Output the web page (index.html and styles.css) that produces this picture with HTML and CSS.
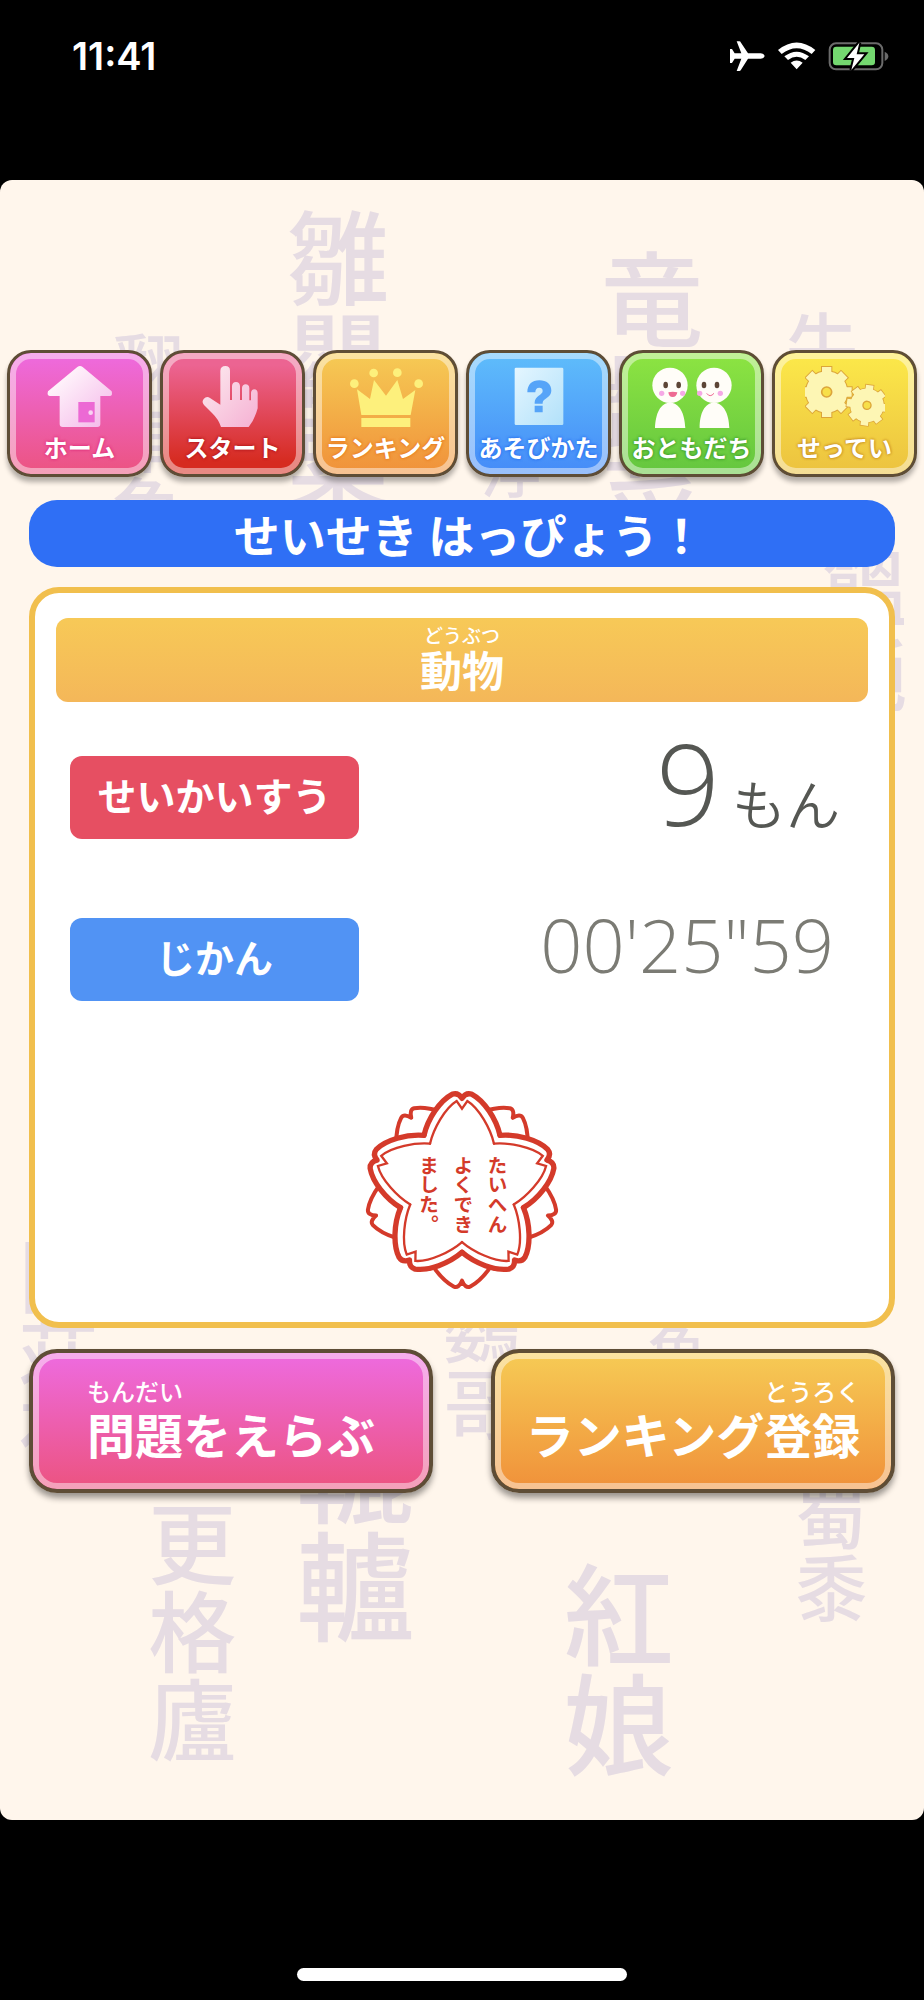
FILE: index.html
```html
<!DOCTYPE html>
<html lang="ja">
<head>
    <meta charset="UTF-8">
    <meta name="viewport" content="width=device-width, initial-scale=1.0">
    <title>せいせき はっぴょう！</title>
    <link rel="stylesheet" href="styles.css">
</head>
<body>
    <div class="status-bar">
        <span class="status-time">11:41</span>
        <div class="status-icons">
            <svg width="36" height="32" viewBox="90 30 108 96" aria-hidden="true">
                <path fill="#fff" d="M113 34h8q3 0 5 4l21 32h38q11 1 12 8q-1 7-12 8h-38l-21 33q-2 4-5 4h-8l14-37h-20l-8 13h-6V57h6l8 13h20z"/>
            </svg>
            <svg width="39" height="32" viewBox="234 30 117 96" aria-hidden="true">
                <path fill="#fff" d="M237 60q56-45 112 0l-11 12q-45-35-90 0zM256 79q37-28 74 0l-11 11q-26-19-52 0zM275 98q18-13 36 0l-18 20z"/>
            </svg>
            <svg width="61" height="32" viewBox="384 30 183 96" aria-hidden="true">
                <rect x="389" y="40" width="158" height="78" rx="19" fill="none" stroke="#6b6b6b" stroke-width="6"/>
                <path fill="#6b6b6b" d="M554 65q11 5 11 14t-11 14z"/>
                <rect x="399" y="50" width="126" height="56" rx="10" fill="#74d870"/>
                <path fill="#fff" stroke="#000" stroke-width="12" paint-order="stroke" d="M478 38l-37 46h22l-9 36 39-47h-23z"/>
            </svg>
        </div>
    </div>

    <div class="app">
        <div class="kanji-bg" aria-hidden="true">
            <span class="kanji kanji-hinageshi">雛罌粟</span>
            <span class="kanji kanji-manbou">翻車魚</span>
            <span class="kanji kanji-asparagus">竜髭菜</span>
            <span class="kanji kanji-gobou">牛蒡</span>
            <span class="kanji kanji-udon">饂飩</span>
            <span class="kanji kanji-uki">浮</span>
            <span class="kanji kanji-left">門荘荷</span>
            <span class="kanji kanji-inko">鸚哥</span>
            <span class="kanji kanji-uo">魚</span>
            <span class="kanji kanji-rokuro">轆轤</span>
            <span class="kanji kanji-kangaroo">更格廬</span>
            <span class="kanji kanji-tentou">紅娘</span>
            <span class="kanji kanji-kibi">蜀黍</span>
        </div>

        <nav class="menu">
            <a href="#home" class="menu-btn menu-home">
                <svg class="menu-icon" viewBox="119 72 240 192" aria-hidden="true">
                    <defs>
                        <linearGradient id="g-home" x1="0" y1="0" x2="1" y2="1"><stop offset="0.2" stop-color="#fff4fb"/><stop offset="1" stop-color="#f3b5e8"/></linearGradient>
                    </defs>
                    <path fill="url(#g-home)" d="M231 81q8-6 16 0l87 73q4 14-6 14h-28v84q0 9-9 9H187q-9 0-9-9v-84h-30q-9-1-5-14z"/>
                    <path fill="#ec69d4" d="M234 186h49v61h-49z"/>
                    <circle cx="271" cy="218" r="7" fill="#f8d3f2"/>
                </svg>
                <span>ホーム</span>
            </a>
            <a href="#start" class="menu-btn menu-start">
                <svg class="menu-icon" viewBox="577 72 240 192" aria-hidden="true">
                    <defs>
                        <linearGradient id="g-hand" x1="0" y1="0" x2="1" y2="1"><stop offset="0.2" stop-color="#fbe0ea"/><stop offset="1" stop-color="#f5b0d3"/></linearGradient>
                    </defs>
                    <path fill="url(#g-hand)" d="M659 92q1-14 15-14t14 14v88h6v-42q1-12 12-12t12 12v42h6v-36q1-11 11-11t11 11v37h5v-22q1-11 10-11t10 11v46q-8 31-27 56h-83q-7-23-27-42l-24-24q-8-9-1-18 9-11 19-3l31 20z"/>
                </svg>
                <span>スタート</span>
            </a>
            <a href="#ranking" class="menu-btn menu-ranking">
                <svg class="menu-icon" viewBox="122 72 240 192" aria-hidden="true">
                    <g fill="#fdf07c">
                        <path d="M155 148l39 29 12-57 36 47 34-47 17 57 37-27-14 75H168zM168 234h147v27H168z"/>
                        <circle cx="147" cy="131" r="13"/>
                        <circle cx="205" cy="99" r="13"/>
                        <circle cx="276" cy="98" r="13"/>
                        <circle cx="340" cy="131" r="13"/>
                    </g>
                </svg>
                <span>ランキング</span>
            </a>
            <a href="#howto" class="menu-btn menu-howto">
                <svg class="menu-icon" viewBox="580 72 240 192" aria-hidden="true">
                    <defs>
                        <linearGradient id="g-card" x1="0" y1="0" x2="1" y2="1"><stop offset="0" stop-color="#e4f6ff"/><stop offset="1" stop-color="#b2e1fa"/></linearGradient>
                    </defs>
                    <rect x="627" y="83" width="146" height="172" rx="4" fill="url(#g-card)"/>
                    <path fill="#56a4f8" d="M665 157c0-23 14-36 36-36 22 0 36 12 36 31 0 21-26 23-26 36v3h-24v-4c0-19 24-22 24-34 0-7-4-10-10-10-8 0-12 5-12 14zM687 197h24v20h-24z"/>
                </svg>
                <span>あそびかた</span>
            </a>
            <a href="#friends" class="menu-btn menu-friends">
                <svg class="menu-icon" viewBox="125 72 240 192" aria-hidden="true">
                    <g fill="#fffdf8">
                        <ellipse cx="179" cy="136" rx="53" ry="53"/>
                        <ellipse cx="311" cy="136" rx="53" ry="53"/>
                        <path d="M134 264c2-44 16-76 45-76s44 32 46 76zM268 264c0-44 15-76 43-76s45 32 46 76z"/>
                    </g>
                    <g fill="#5d4637">
                        <ellipse cx="166" cy="135" rx="7" ry="10"/>
                        <ellipse cx="205" cy="135" rx="7" ry="10"/>
                        <ellipse cx="281" cy="135" rx="7" ry="10"/>
                        <ellipse cx="320" cy="135" rx="7" ry="10"/>
                    </g>
                    <g fill="#f5a9e5">
                        <circle cx="154" cy="160" r="8"/>
                        <circle cx="217" cy="160" r="8"/>
                        <circle cx="268" cy="160" r="8"/>
                        <circle cx="330" cy="160" r="8"/>
                    </g>
                    <path fill="#ee6a93" d="M174 157q13-3 27 0-2 14-14 14t-13-14z"/>
                    <path fill="none" stroke="#ee6a93" stroke-width="3" d="M289 160q10 14 22 0"/>
                </svg>
                <span>おともだち</span>
            </a>
            <a href="#settings" class="menu-btn menu-settings">
                <svg class="menu-icon" viewBox="583 72 240 192" aria-hidden="true">
                    <defs>
                        <g id="gear" fill="none">
                            <g stroke="#dca53a">
                                <path stroke-width="34" d="M648 78v156M570 156h156M593 101l110 110M703 101L593 211"/>
                                <circle cx="648" cy="156" r="39" stroke-width="52"/>
                            </g>
                            <g stroke="#fdf6b4">
                                <path stroke-width="28" d="M648 81v150M573 156h150M595 103l106 106M701 103L595 209"/>
                                <circle cx="648" cy="156" r="39" stroke-width="46"/>
                            </g>
                            <circle cx="648" cy="156" r="15" fill="#f7df49" stroke="#dca53a" stroke-width="5"/>
                        </g>
                    </defs>
                    <use href="#gear"/>
                    <use href="#gear" transform="translate(769 196) rotate(8) scale(0.81) translate(-648 -156)"/>
                </svg>
                <span>せってい</span>
            </a>
        </nav>

        <main class="content">
            <h1 class="title">せいせき はっぴょう！</h1>

            <section class="card">
                <h2 class="category"><ruby>動物<rt>どうぶつ</rt></ruby></h2>

                <dl class="scores">
                    <div class="score-row">
                        <dt class="label label-red">せいかいすう</dt>
                        <dd class="count">9<span class="unit">もん</span></dd>
                    </div>
                    <div class="score-row">
                        <dt class="label label-blue">じかん</dt>
                        <dd class="time">00'25"59</dd>
                    </div>
                </dl>

                <svg class="stamp" viewBox="4 0 660 660" role="img" aria-label="たいへんよくできました。">
                    <defs>
                        <path id="back" d="M252 566C268 588 290 610 310 620Q324 626 334 602Q344 626 358 620C378 610 400 588 416 566"/>
                        <path id="petal" d="M220 166C232 115 268 62 304 43Q322 36 334 55Q346 36 364 43C400 62 436 115 448 166"/>
                        <path id="line" d="M238 191C248 148 282 85 318 63L334 86L350 63C386 85 420 148 430 191"/>
                    </defs>
                    <g fill="#fff" stroke="#d43a2a" stroke-width="12" stroke-linejoin="round">
                        <use href="#back"/>
                        <use href="#back" transform="rotate(72 334 323) translate(0 -8)"/>
                        <use href="#back" transform="rotate(144 334 323) translate(0 -20)"/>
                        <use href="#back" transform="rotate(216 334 323) translate(0 -20)"/>
                        <use href="#back" transform="rotate(288 334 323) translate(0 -8)"/>
                    </g>
                    <circle cx="334" cy="323" r="200" fill="#fff"/>
                    <g fill="#fff" stroke="#d43a2a" stroke-width="16" stroke-linecap="round" stroke-linejoin="round">
                        <use href="#petal"/>
                        <use href="#petal" transform="rotate(72 334 323)"/>
                        <use href="#petal" transform="rotate(144 334 323)"/>
                        <use href="#petal" transform="rotate(216 334 323)"/>
                        <use href="#petal" transform="rotate(288 334 323)"/>
                    </g>
                    <g fill="none" stroke="#d43a2a" stroke-width="7" stroke-linecap="round">
                        <use href="#line"/>
                        <use href="#line" transform="rotate(72 334 323)"/>
                        <use href="#line" transform="rotate(144 334 323)"/>
                        <use href="#line" transform="rotate(216 334 323)"/>
                        <use href="#line" transform="rotate(288 334 323)"/>
                    </g>
                    <g class="stamp-text">
                        <text x="441" y="226">たいへん</text>
                        <text x="338" y="226">よくでき</text>
                        <text x="235" y="226">ました。</text>
                    </g>
                </svg>
            </section>

            <div class="actions">
                <button type="button" class="action action-select"><ruby>問題<rt>もんだい</rt></ruby>をえらぶ</button>
                <button type="button" class="action action-ranking">ランキング<ruby>登録<rt>とうろく</rt></ruby></button>
            </div>
        </main>
    </div>

    <div class="home-indicator"></div>
</body>
</html>
```
FILE: styles.css
```css
* {
    box-sizing: border-box;
}

body {
    margin: 0;
    min-height: 100vh;
    display: flex;
    flex-direction: column;
    background: #000;
    font-family: "Noto Sans CJK JP", sans-serif;
}

/* Status bar */
.status-bar {
    display: flex;
    justify-content: space-between;
    align-items: flex-start;
    height: 180px;
    padding: 40px 35px 0 72px;
    color: #fff;
}

.status-time {
    font-family: Inter, sans-serif;
    font-size: 38px;
    font-weight: 600;
    line-height: 32px;
}

.status-icons {
    display: flex;
    gap: 12px;
}

/* App area */
.app {
    position: relative;
    overflow: hidden;
    padding: 170px 0 327px;
    border-radius: 12px;
    background: #fff6ec;
}

/* Kanji scattered over the background */
.kanji {
    position: absolute;
    writing-mode: vertical-rl;
    color: #e6dce3;
    font-weight: 500;
    line-height: 1;
    white-space: nowrap;
}

.kanji-hinageshi {
    top: 27px;
    left: 31%;
    font-size: 102px;
}

.kanji-manbou {
    top: 151px;
    left: 12%;
    font-size: 72px;
}

.kanji-asparagus {
    top: 68px;
    left: 65%;
    font-size: 102px;
}

.kanji-gobou {
    top: 130px;
    left: 85%;
    font-size: 72px;
}

.kanji-udon {
    top: 366px;
    left: 89%;
    font-size: 84px;
}

.kanji-uki {
    top: 260px;
    left: 52%;
    font-size: 60px;
}

.kanji-left {
    top: 1056px;
    left: 2%;
    font-size: 80px;
}

.kanji-inko {
    top: 1110px;
    left: 48%;
    font-size: 76px;
}

.kanji-uo {
    top: 1142px;
    left: 70%;
    font-size: 60px;
}

.kanji-rokuro {
    top: 1230px;
    left: 32%;
    font-size: 118px;
}

.kanji-kangaroo {
    top: 1320px;
    left: 16%;
    font-size: 88px;
}

.kanji-tentou {
    top: 1380px;
    left: 61%;
    font-size: 110px;
}

.kanji-kibi {
    top: 1300px;
    left: 86%;
    font-size: 72px;
}

/* Top menu */
.menu {
    position: relative;
    display: grid;
    grid-template-columns: repeat(6, 1fr);
    gap: 8px;
    padding: 0 7px;
}

.menu-btn {
    display: flex;
    flex-direction: column;
    align-items: center;
    height: 127px;
    padding-top: 11px;
    border: 3px solid #5e4d36;
    border-radius: 24px;
    box-shadow: inset 0 0 0 6px rgba(255, 255, 255, 0.45), 0 5px 5px rgba(0, 0, 0, 0.3);
    color: #fff;
    font-size: 24px;
    font-weight: 700;
    line-height: 38px;
    text-decoration: none;
    white-space: nowrap;
}

.menu-icon {
    width: 80px;
    height: 64px;
}

.menu-home {
    background: linear-gradient(#ee6be0, #ec5380);
    text-shadow: 0 0 3px #e0307c, 0 0 3px #e0307c;
}

.menu-start {
    background: linear-gradient(#ec6492 10%, #d62b20 90%);
    text-shadow: 0 0 3px #b3181c, 0 0 3px #b3181c;
}

.menu-ranking {
    background: linear-gradient(#f6cb55, #f0913a);
    text-shadow: 0 0 3px #e87a1c, 0 0 3px #e87a1c;
}

.menu-howto {
    background: linear-gradient(#5fbdfb, #458bf8);
    text-shadow: 0 0 3px #2a72f0, 0 0 3px #2a72f0;
}

.menu-friends {
    background: linear-gradient(#8de442, #64c63f);
    text-shadow: 0 0 3px #3f9e2c, 0 0 3px #3f9e2c;
}

.menu-settings {
    background: linear-gradient(#fce94a, #ecc23f);
    text-shadow: 0 0 3px #c58a20, 0 0 3px #c58a20;
}

/* Furigana stacked above its kanji */
ruby {
    display: inline-flex;
    flex-direction: column-reverse;
    align-items: center;
}

rt {
    display: block;
    font-weight: 500;
}

/* Results */
.content {
    position: relative;
    padding: 0 29px;
}

.title {
    margin: 23px 0 20px;
    padding-left: 14px;
    border-radius: 28px;
    background: #2f6ff5;
    color: #fff;
    font-size: 46px;
    font-weight: 700;
    line-height: 67px;
    text-align: center;
}

.card {
    padding: 25px 21px 22px;
    border: 6px solid #f1bf4d;
    border-radius: 30px;
    background: #fff;
}

.category {
    display: flex;
    justify-content: center;
    align-items: flex-end;
    height: 84px;
    margin: 0;
    padding-bottom: 9px;
    border-radius: 12px;
    background: linear-gradient(#f7c957, #f4b759);
    color: #fff;
    font-size: 42px;
    font-weight: 700;
    line-height: 48px;
}

.category rt {
    font-size: 19px;
    line-height: 20px;
}

.scores {
    display: flex;
    flex-direction: column;
    gap: 79px;
    margin: 54px 0 79px;
    padding: 0 28px 0 14px;
}

.score-row {
    display: flex;
    justify-content: space-between;
    height: 83px;
}

.label {
    width: 289px;
    border-radius: 12px;
    color: #fff;
    font-size: 39px;
    font-weight: 700;
    line-height: 76px;
    text-align: center;
}

.label-red {
    background: #e64f62;
}

.label-blue {
    background: #5193f4;
}

.count,
.time {
    margin: 0;
    font-family: "Open Sans", "Noto Sans CJK JP", sans-serif;
    font-weight: 350;
    line-height: 54px;
}

.count {
    color: #555753;
    font-size: 112px;
}

.unit {
    margin-left: 12px;
    font-family: "Noto Sans CJK JP", sans-serif;
    font-size: 54px;
}

.time {
    padding-right: 6px;
    color: #7b7b74;
    font-size: 74px;
}

.stamp {
    display: block;
    width: 220px;
    height: 220px;
    margin: 0 auto;
}

.stamp-text {
    writing-mode: vertical-rl;
    fill: #d43a2a;
    font-size: 59px;
    font-weight: 700;
}

/* Bottom buttons */
.actions {
    display: grid;
    grid-template-columns: 1fr 1fr;
    gap: 58px;
    margin-top: 21px;
}

.action {
    display: flex;
    justify-content: center;
    align-items: flex-end;
    height: 144px;
    padding: 0 0 28px;
    border: 4px solid #5e4d36;
    border-radius: 28px;
    box-shadow: inset 0 0 0 6px rgba(255, 255, 255, 0.45), 0 5px 6px rgba(0, 0, 0, 0.4);
    color: #fff;
    font-family: inherit;
    font-size: 48px;
    font-weight: 700;
    line-height: 56px;
    white-space: nowrap;
}

.action rt {
    font-size: 24px;
    line-height: 28px;
}

.action-select {
    background: linear-gradient(#ee6be0, #ec5380);
}

.action-ranking {
    background: linear-gradient(#f6cb55, #f0913a);
}

/* Home indicator */
.home-indicator {
    width: 330px;
    height: 13px;
    margin: auto auto 19px;
    border-radius: 7px;
    background: #fff;
}
```
